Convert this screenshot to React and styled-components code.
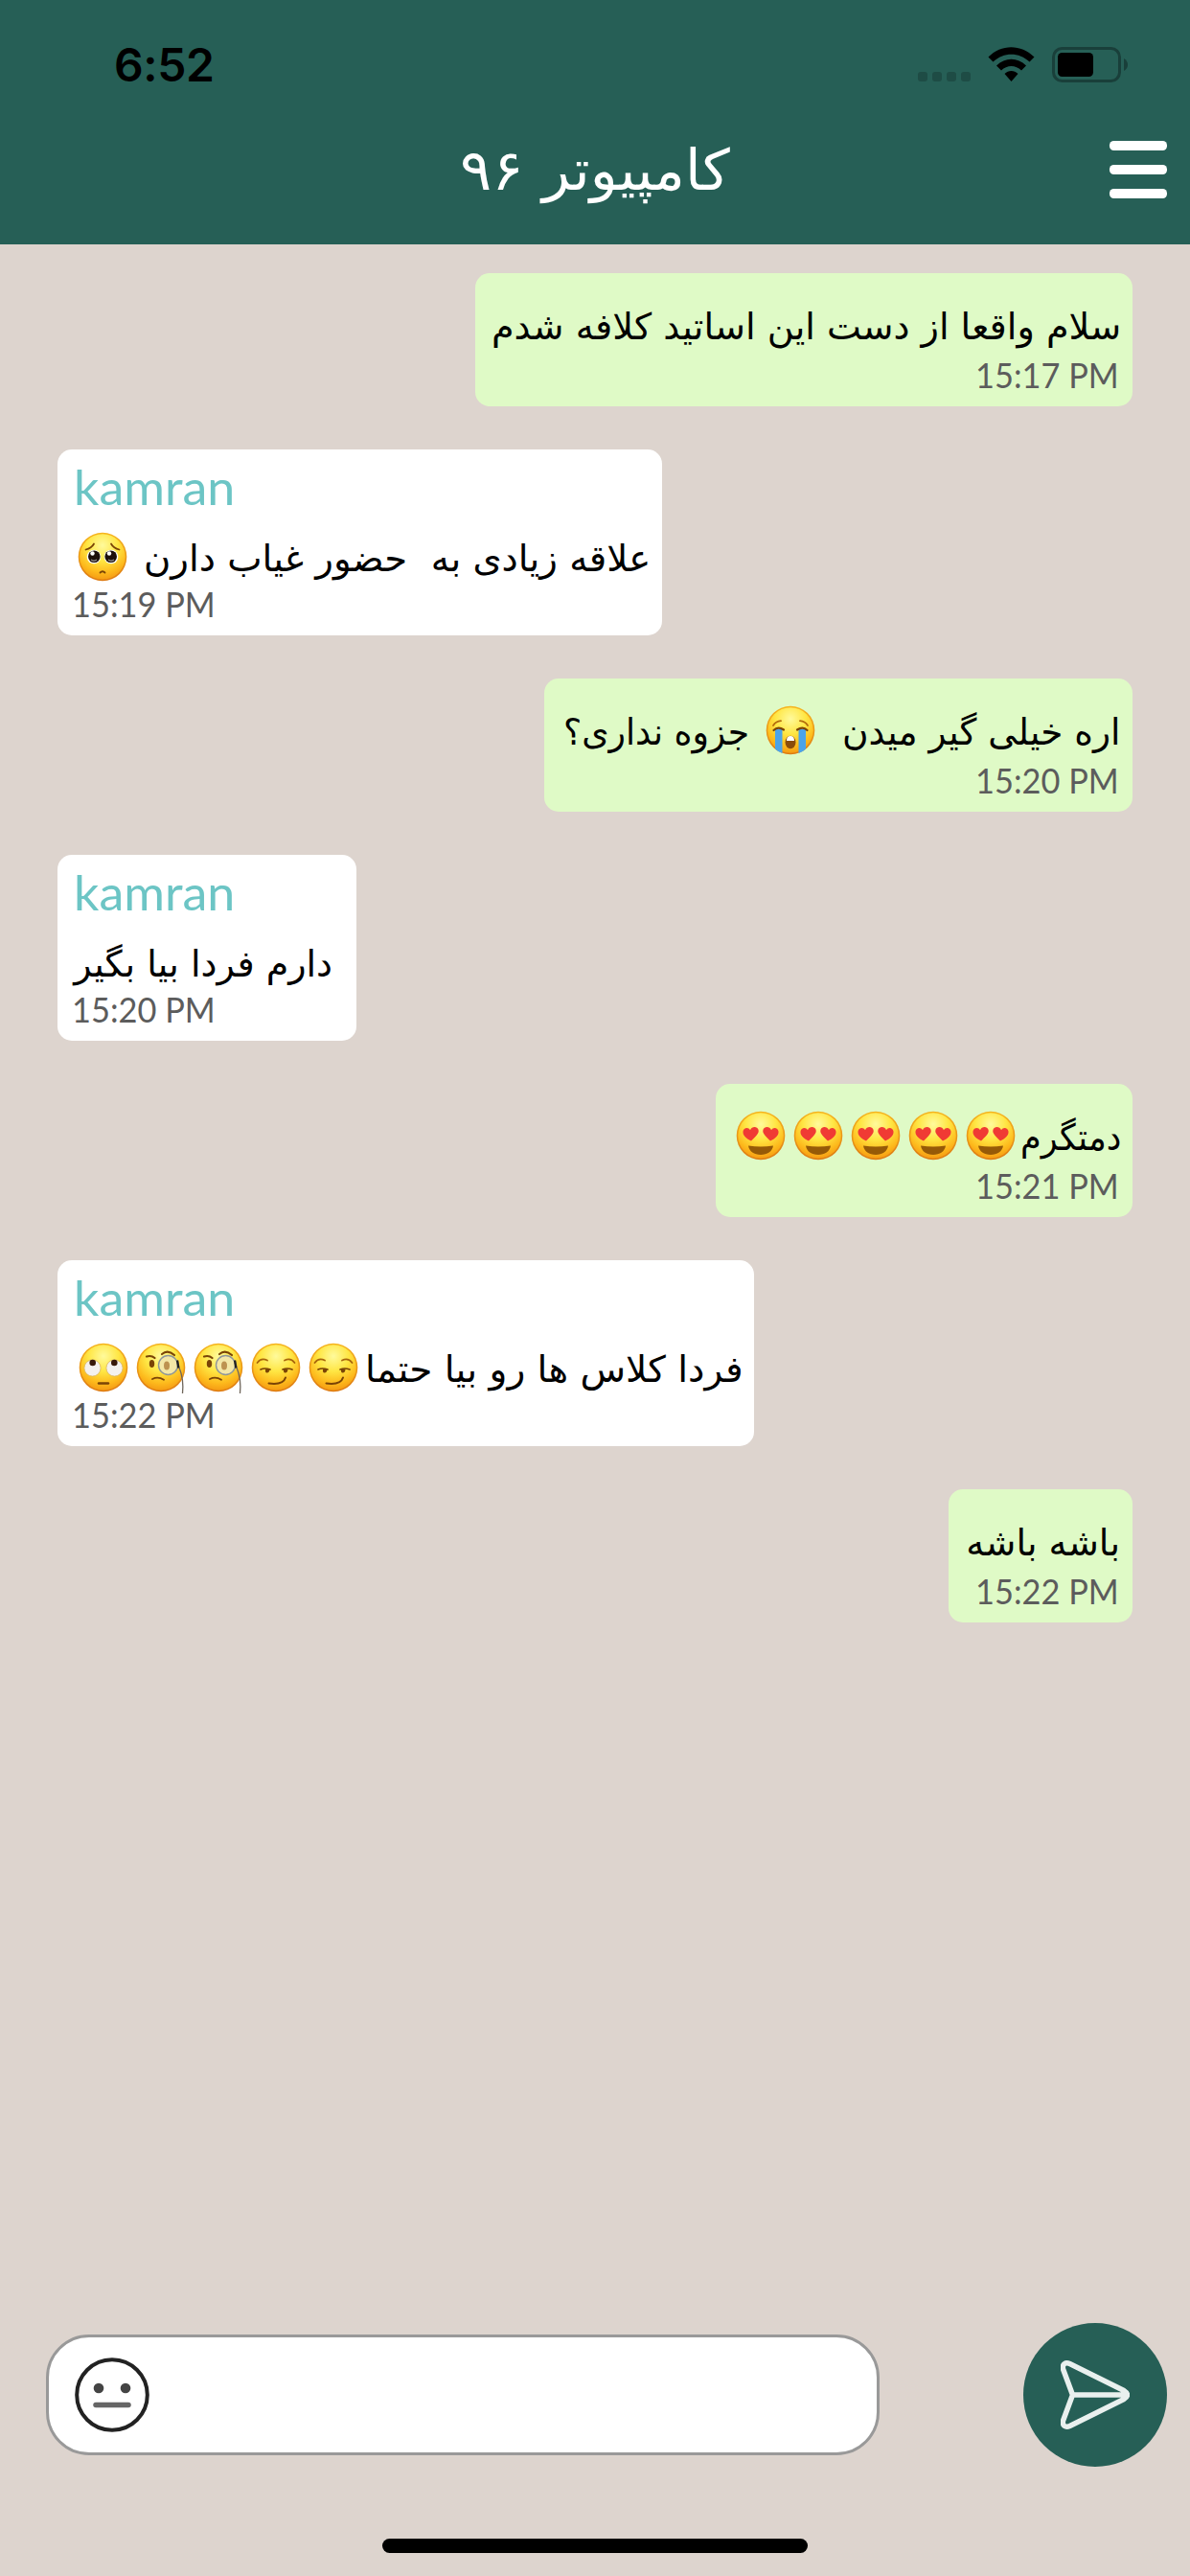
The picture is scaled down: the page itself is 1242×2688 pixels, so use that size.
import React, { useLayoutEffect, useRef, useState } from 'react';
import styled, { createGlobalStyle } from 'styled-components';

const GlobalStyle = createGlobalStyle`
  html, body { margin: 0; padding: 0; }
  body { background: #ddd4ce; }
  * { box-sizing: border-box; }
`;

const Screen = styled.div`
  width: 1242px;
  height: 2688px;
  display: flex;
  flex-direction: column;
  background: #ddd4ce;
  overflow: hidden;
`;

const Header = styled.header`
  height: 255px;
  flex: none;
  display: flex;
  flex-direction: column;
  background: #265f56;
`;

const StatusBar = styled.div`
  height: 132px;
  display: flex;
  justify-content: space-between;
  padding: 0 65px 0 119px;
`;

const Clock = styled.div`
  margin-top: 39px;
  font: 600 48px/58px Inter, sans-serif;
  letter-spacing: -0.4px;
  color: #000;
`;

const StatusIcons = styled.div`
  display: flex;
  padding-top: 49px;
`;

const SignalDots = styled.div`
  display: flex;
  gap: 5px;
  padding-top: 26px;
  margin-right: 18px;
`;

const SignalDot = styled.i`
  width: 10px;
  height: 10px;
  border-radius: 3px;
  background: #1e4c45;
`;

const Wifi = styled.svg`
  width: 49px;
  height: 37px;
  margin-right: 18px;
`;

const Battery = styled.svg`
  width: 79px;
  height: 37px;
`;

const TitleBar = styled.div`
  flex: 1;
  display: grid;
  grid-template-columns: 1fr 280px 1fr;
  padding: 0 24px 0 26px;
`;

const Title = styled.h1`
  grid-column: 2;
  margin: 0;
  display: flex;
  direction: rtl;
  font: 400 59px/92px "DejaVu Sans", sans-serif;
  color: #fff;
`;

const MenuButton = styled.button`
  justify-self: end;
  width: 60px;
  margin-top: 15px;
  padding: 0;
  border: 0;
  background: none;
  display: flex;
  flex-direction: column;
  gap: 15.5px;
`;

const MenuBar = styled.span`
  width: 60px;
  height: 9.6px;
  border-radius: 4.5px;
  background: #fff;
`;

const MessageList = styled.main`
  flex: 1;
  display: flex;
  flex-direction: column;
  gap: 45px;
  padding: 30px 60px 0;
`;

const Bubble = styled.article`
  width: ${(p) => p.$width}px;
  height: ${(p) => (p.$mine ? 139 : 194)}px;
  flex: none;
  align-self: ${(p) => (p.$mine ? 'flex-end' : 'flex-start')};
  display: flex;
  flex-direction: column;
  padding: ${(p) => (p.$mine ? '24px 12px 0' : '12px 14px 0 15px')};
  border-radius: 15px;
  background: ${(p) => (p.$mine ? '#dffac6' : '#fff')};
`;

const Sender = styled.div`
  height: 70px;
  flex: none;
  padding-left: 2px;
  font: 400 51px/54px Lato, sans-serif;
  color: #6cc5c5;
`;

const Line = styled.div`
  height: 61px;
  flex: none;
  display: flex;
  direction: rtl;
`;

const Time = styled.time`
  align-self: ${(p) => (p.$mine ? 'flex-end' : 'flex-start')};
  margin-top: ${(p) => (p.$mine ? -1.5 : -4)}px;
  padding: ${(p) => (p.$mine ? '0 2px 0 0' : '0')};
  display: flex;
  font: 400 36px/44px Lato, sans-serif;
  color: #5c5c5c;
`;

const FitBox = styled.span`
  display: flex;
  flex: none;
  width: ${(p) => p.$width}px;
  margin-inline-end: ${(p) => p.$after}px;
  margin-inline-start: ${(p) => p.$before}px;
  direction: ${(p) => p.$dir};
`;

const FitInner = styled.span`
  flex: none;
  white-space: pre;
  transform-origin: ${(p) => (p.$dir === 'rtl' ? 'right' : 'left')} center;
`;

const Phrase = styled.span`
  display: flex;
  padding-top: 2px;
  font: 400 38px/61px "DejaVu Sans", sans-serif;
  color: #000;
`;

function Fit({ width, before = 0, after = 0, dir = 'rtl', children }) {
  const ref = useRef(null);
  const [scale, setScale] = useState(1);
  useLayoutEffect(() => {
    const measure = () => {
      if (ref.current && ref.current.offsetWidth) setScale(width / ref.current.offsetWidth);
    };
    measure();
    document.fonts.ready.then(measure);
  }, [width]);
  return (
    <FitBox $width={width} $before={before} $after={after} $dir={dir}>
      <FitInner ref={ref} $dir={dir} style={{ transform: `scaleX(${scale})` }}>
        {children}
      </FitInner>
    </FitBox>
  );
}

const EmojiSvg = styled.svg`
  flex: none;
  width: 60px;
  height: 60px;
  overflow: visible;
`;

const brown = '#7a4406';

const faces = {
  pleading: (
    <>
      <path d="M12.5 21.5q6-1.500 8.500-6M47.500 21.500q-6-1.500-8.500-6" transform="translate(0 1)" fill="none" stroke={brown} strokeWidth="1.800" strokeLinecap="round" />
      <circle cx="21" cy="30" r="7.300" fill="#fff" />
      <circle cx="39" cy="30" r="7.300" fill="#fff" />
      <circle cx="21.300" cy="29.700" r="6.300" fill="#1d0f0a" />
      <circle cx="38.700" cy="29.700" r="6.300" fill="#1d0f0a" />
      <circle cx="19.500" cy="26.500" r="2.200" fill="#fff" />
      <circle cx="37" cy="26.500" r="2.200" fill="#fff" />
      <path d="M18 33q3 2.500 6 0M36 33q3 2.500 6 0" fill="none" stroke="#8b8b8b" strokeWidth="1.500" />
      <path d="M27.500 46.500q2.500-2.500 5 0" fill="none" stroke={brown} strokeWidth="1.800" strokeLinecap="round" />
    </>
  ),
  crying: (
    <>
      <path d="M14 29h7.500v25q-4-1-7.500-4.500zM38.500 29H46v20.500q-3.500 3.500-7.500 4.500z" fill="#4ba3ea" />
      <path d="M12.500 30q4.500-4.500 10.500-.5M47.500 30q-4.500-4.500-10.500-.5" fill="none" stroke={brown} strokeWidth="2.200" strokeLinecap="round" />
      <path d="M12 25q3-4.500 8-4.800M48 25q-3-4.500-8-4.800" fill="none" stroke="#b26b0c" strokeWidth="1.800" strokeLinecap="round" />
      <ellipse cx="30" cy="42.500" rx="5.500" ry="6.800" fill="#8b4c0b" />
      <path d="M26 41q0-5 4-5t4 5z" fill="#fff" />
    </>
  ),
  hearts: (
    <>
      <path d="M18.500 35.500C13 33 9.500 29.500 10 25.500c.6-4 5.500-5 7.500-1.300 1.500-3.700 7-4.400 8.500-.4 1.400 4-3.500 7.500-7.500 11.700z" transform="translate(1.500 0)" fill="#f03a34" />
      <path d="M41.500 35.500C47 33 50.500 29.500 50 25.500c-.6-4-5.500-5-7.500-1.300-1.500-3.700-7-4.400-8.500-.4-1.400 4 3.500 7.500 7.500 11.700z" transform="translate(-1.500 0)" fill="#f03a34" />
      <path d="M17 40.500q13 2.200 26 0c-1 6-6 9.500-13 9.500s-12-3.500-13-9.500z" fill="#965a07" />
    </>
  ),
  smirk: (
    <>
      <path d="M10.500 25q4-5.500 10.500-2.500M49.500 25q-4-5.500-10.500-2.500" fill="none" stroke="#a9660c" strokeWidth="1.800" strokeLinecap="round" />
      <path d="M14 32q4.500-2 10 0M37 32q4.500-2 10 0" fill="none" stroke={brown} strokeWidth="1.700" strokeLinecap="round" />
      <path d="M19 31.500h4.500q0 4-3 4-2 0-1.500-4zM38 31.500h4.500q0 4-3 4-2 0-1.500-4z" fill={brown} />
      <path d="M22.500 46.500q15 2 17.500-6" fill="none" stroke={brown} strokeWidth="2" strokeLinecap="round" />
    </>
  ),
  monocle: (
    <>
      <path d="M15 18.500q5-1.500 8.500 1.500M31 16q6-5 13 1" fill="none" stroke={brown} strokeWidth="2.200" strokeLinecap="round" />
      <ellipse cx="20.500" cy="26" rx="2.700" ry="4" fill={brown} />
      <circle cx="37.500" cy="27.500" r="10" fill="#f3e7a7" stroke="#8f9699" strokeWidth="1.400" />
      <ellipse cx="36" cy="28" rx="3" ry="4.500" fill="#bd9250" />
      <path d="M47.500 23l1.500 7q5 12 3.500 27" fill="none" stroke="#6f665b" strokeWidth="1.300" />
      <path d="M47 22.500l1.300 8" stroke="#202020" strokeWidth="2.200" />
      <path d="M21 42q6-3 12 .8" fill="none" stroke={brown} strokeWidth="1.800" strokeLinecap="round" />
    </>
  ),
  rolling: (
    <>
      <circle cx="18.500" cy="30.500" r="8.600" fill="#f4f1ee" stroke="#d9b45d" strokeWidth=".8" />
      <circle cx="41.500" cy="30.500" r="8.600" fill="#f4f1ee" stroke="#d9b45d" strokeWidth=".8" />
      <circle cx="18.700" cy="25" r="3.300" fill="#38190a" />
      <circle cx="41.300" cy="25" r="3.300" fill="#38190a" />
      <path d="M25 46.500h10" stroke={brown} strokeWidth="2.400" strokeLinecap="round" />
    </>
  ),
};

function Emoji({ kind, label }) {
  return (
    <EmojiSvg viewBox="0 0 60 60" role="img" aria-label={label}>
      <circle cx="30" cy="30" r="25.300" fill="url(#faceRim)" />
      <circle cx="30" cy="30" r="23.800" fill="url(#faceFill)" />
      {faces[kind]}
    </EmojiSvg>
  );
}

const Defs = styled.svg`
  width: 0;
  height: 0;
  display: block;
`;

const Composer = styled.footer`
  height: 225px;
  flex: none;
  display: flex;
  justify-content: space-between;
  align-items: flex-start;
  padding: 0 24px 0 48px;
`;

const InputBox = styled.div`
  width: 870px;
  height: 126px;
  margin-top: 12px;
  padding: 21px 27px;
  border: 3px solid #999;
  border-radius: 45px;
  background: #fff;
`;

const NeutralFace = styled.svg`
  display: block;
  width: 78px;
  height: 78px;
`;

const SendButton = styled.button`
  width: 150px;
  height: 150px;
  padding: 0;
  border: 0;
  border-radius: 50%;
  background: #265f56;
  display: grid;
  place-items: center;
`;

const Plane = styled.svg`
  width: 72px;
  height: 72px;
`;

const HomeArea = styled.div`
  height: 39px;
  flex: none;
  display: flex;
  justify-content: center;
`;

const HomeIndicator = styled.div`
  width: 444px;
  height: 15px;
  border-radius: 8px;
  background: #000;
`;

const messages = [
  { mine: true, width: 686, time: '15:17 PM', parts: [{ text: 'سلام واقعا از دست این اساتید کلافه شدم', width: 657 }] },
  {
    width: 631,
    time: '15:19 PM',
    parts: [
      { text: 'علاقه زیادی به  حضور غیاب دارن', width: 529, before: -2, after: 13 },
      { emoji: 'pleading', label: '🥺' },
    ],
  },
  {
    mine: true,
    width: 614,
    time: '15:20 PM',
    parts: [
      { text: 'اره خیلی گیر میدن', width: 290, before: 1, after: 24 },
      { emoji: 'crying', label: '😭' },
      { text: 'جزوه نداری؟', width: 194, before: 13 },
    ],
  },
  { width: 312, time: '15:20 PM', parts: [{ text: 'دارم فردا بیا بگیر', width: 270, before: 11 }] },
  {
    mine: true,
    width: 435,
    time: '15:21 PM',
    parts: [
      { text: 'دمتگرم', width: 105, before: 0, after: 1 },
      ...Array.from({ length: 5 }, () => ({ emoji: 'hearts', label: '😍' })),
    ],
  },
  {
    width: 727,
    time: '15:22 PM',
    parts: [
      { text: 'فردا کلاس ها رو بیا حتما', width: 395, before: -3, after: 3 },
      { emoji: 'smirk', label: '😏' },
      { emoji: 'smirk', label: '😏' },
      { emoji: 'monocle', label: '🧐' },
      { emoji: 'monocle', label: '🧐' },
      { emoji: 'rolling', label: '🙄' },
    ],
  },
  { mine: true, width: 192, time: '15:22 PM', parts: [{ text: 'باشه باشه', width: 161, before: 1 }] },
];

function Message({ mine, width, time, parts }) {
  return (
    <Bubble $mine={mine} $width={width}>
      {!mine && (
        <Sender>
          <Fit width={168} dir="ltr">kamran</Fit>
        </Sender>
      )}
      <Line>
        {parts.map((p, i) =>
          p.emoji ? (
            <Emoji key={i} kind={p.emoji} label={p.label} />
          ) : (
            <Phrase key={i}>
              <Fit width={p.width} before={p.before} after={p.after}>{p.text}</Fit>
            </Phrase>
          )
        )}
      </Line>
      <Time $mine={mine}>
        <Fit width={150} dir="ltr">{time}</Fit>
      </Time>
    </Bubble>
  );
}

export default function App() {
  return (
    <Screen>
      <GlobalStyle />
      <Defs aria-hidden="true">
        <defs>
          <linearGradient id="faceRim" x1="0" y1="0" x2="0" y2="1">
            <stop offset="0" stopColor="#f6b51e" />
            <stop offset="1" stopColor="#dd7a12" />
          </linearGradient>
          <radialGradient id="faceFill" cx=".5" cy=".25" r=".75">
            <stop offset="0" stopColor="#fffa9c" />
            <stop offset=".45" stopColor="#ffe643" />
            <stop offset=".8" stopColor="#fdb91c" />
            <stop offset="1" stopColor="#f59c14" />
          </radialGradient>
        </defs>
      </Defs>
      <Header>
        <StatusBar>
          <Clock>6:52</Clock>
          <StatusIcons>
            <SignalDots>
              <SignalDot />
              <SignalDot />
              <SignalDot />
              <SignalDot />
            </SignalDots>
            <Wifi viewBox="0 0 49 37">
              <path d="M.5 10.500C14-3.300 34.500-3.300 48.500 10.500L43.500 15.500C32.500 5 16.500 5 5.500 15.500z" />
              <path d="M9 19.500C18 10.500 31 10.500 40 19.500L35 24.500C29 18.500 20 18.500 14 24.500z" />
              <path d="M17.500 28C21.500 24 27.500 24 31.500 28L24.500 36z" />
            </Wifi>
            <Battery viewBox="0 0 79 37">
              <rect x="1.500" y="1.500" width="69" height="34" rx="9" fill="none" stroke="#193f3a" strokeWidth="3" />
              <rect x="6" y="6" width="37" height="25" rx="4.500" />
              <path d="M75 12q4 2.500 4 6.500t-4 6.500z" fill="#193f3a" />
            </Battery>
          </StatusIcons>
        </StatusBar>
        <TitleBar>
          <Title>
            <Fit width={196} after={20}>کامپیوتر</Fit>
            <Fit width={66}>۹۶</Fit>
          </Title>
          <MenuButton aria-label="menu">
            <MenuBar />
            <MenuBar />
            <MenuBar />
          </MenuButton>
        </TitleBar>
      </Header>
      <MessageList>
        {messages.map((m, i) => (
          <Message key={i} {...m} />
        ))}
      </MessageList>
      <Composer>
        <InputBox>
          <NeutralFace viewBox="0 0 78 78">
            <circle cx="39" cy="39" r="36.800" fill="none" stroke="#222" strokeWidth="4" />
            <circle cx="25" cy="32" r="5.300" fill="#444" />
            <circle cx="53" cy="32" r="5.300" fill="#444" />
            <path d="M22 49.500h34" stroke="#666" strokeWidth="5.500" strokeLinecap="round" />
          </NeutralFace>
        </InputBox>
        <SendButton aria-label="send">
          <Plane viewBox="0 0 72 72">
            <path
              d="M2.500 9C1.500 4 5 1.500 9.500 3.500L66 31.500Q73 36 66 40.500L9.500 68.500C5 70.500 1.500 68 2.500 63L12.500 36zM12.500 36H68"
              fill="none"
              stroke="#e9f0ee"
              strokeWidth="5.500"
              strokeLinejoin="round"
            />
          </Plane>
        </SendButton>
      </Composer>
      <HomeArea>
        <HomeIndicator />
      </HomeArea>
    </Screen>
  );
}
